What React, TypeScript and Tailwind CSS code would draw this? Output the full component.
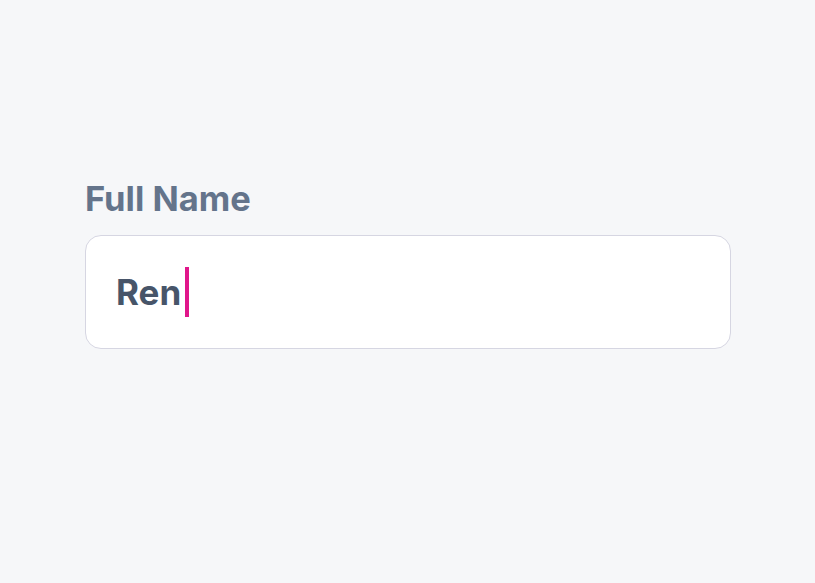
export default function App() {
  return (
    <div
      className="w-[815px] h-[583px] bg-[#f6f7f9] pt-[179px] pl-[85px]"
      style={{ fontFamily: "Inter, 'Noto Sans', sans-serif" }}
    >
      <div className="w-[646px] flex flex-col gap-[16px]">
        <label className="text-[34.5px] leading-[40px] font-bold text-[#64748b]">Full Name</label>
        <div className="h-[114px] bg-white border border-[#d6d6e2] rounded-[16px] flex items-center pl-[30px]">
          <span className="text-[35px] font-bold text-[#475569] leading-none">Ren</span>
          <span className="ml-[4px] w-[4px] h-[50px] bg-[#e0168a]" />
        </div>
      </div>
    </div>
  );
}
